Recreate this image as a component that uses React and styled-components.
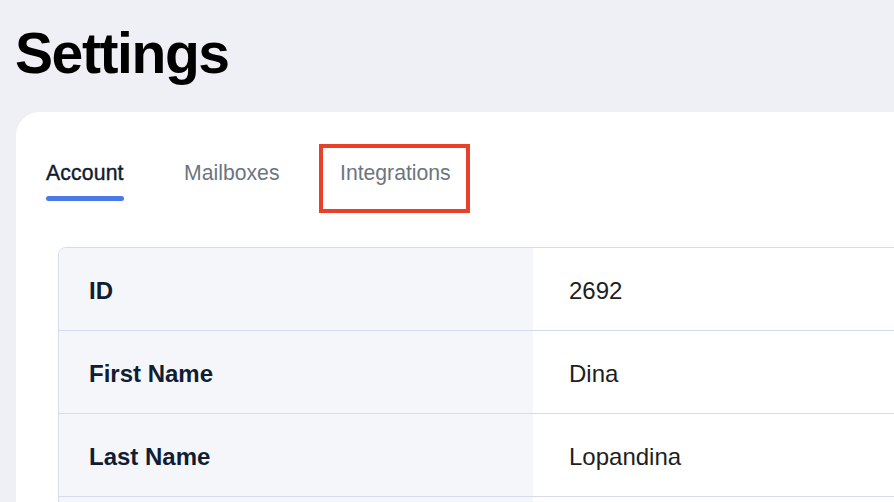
import React from 'react'
import styled, { createGlobalStyle } from 'styled-components'

const GlobalStyle = createGlobalStyle`
html, body {
    margin: 0;
    padding: 0;
    overflow: hidden;
    background: #eff0f5;
    font-family: "Liberation Sans", Arial, Helvetica, sans-serif;
}
`

const tabs = ['Account', 'Mailboxes', 'Integrations']

const fields = [
    { label: 'ID', value: '2692' },
    { label: 'First Name', value: 'Dina' },
    { label: 'Last Name', value: 'Lopandina' },
    { label: '', value: '' },
]

export default function App() {
    return (
        <Page>
            <GlobalStyle />
            <Title>Settings</Title>
            <Card>
                <TabBar>
                    {tabs.map((t, i) => (
                        <Tab key={t} marked={t === 'Integrations'}>
                            <TabLabel active={i === 0}>{t}</TabLabel>
                            <Indicator active={i === 0} />
                        </Tab>
                    ))}
                </TabBar>

                <Table>
                    {fields.map((f, i) => (
                        <Row key={i}>
                            <Label>{f.label}</Label>
                            <Value>{f.value}</Value>
                        </Row>
                    ))}
                </Table>
            </Card>
        </Page>
    )
}

const Page = styled.div`
padding: 0 0 0 16px;
height: 502px;
overflow: hidden;
`

const Title = styled.h1`
margin: 0 0 0 -1px;
padding-top: 21px;
height: 112px;
box-sizing: border-box;
font-size: 57px;
line-height: 64px;
font-weight: 700;
letter-spacing: -1.4px;
color: #000;
`

const Card = styled.div`
width: 1000px;
background: #fff;
border-top-left-radius: 24px;
padding: 49px 0 0 30px;
min-height: 600px;
box-sizing: border-box;
`

const TabBar = styled.div`
display: flex;
gap: 60.5px;
`

const Tab = styled.div`
position: relative;
display: flex;
flex-direction: column;
gap: 11px;
&::after {
    content: '';
    display: ${p => (p.marked ? 'block' : 'none')};
    position: absolute;
    left: -21px;
    right: -19px;
    top: -17px;
    bottom: -12px;
    border: 4px solid #e8412a;
}
`

const TabLabel = styled.span`
font-size: 21.2px;
line-height: 24px;
color: ${p => (p.active ? '#111b2e' : '#6b7580')};
-webkit-text-stroke: ${p => (p.active ? '0.4px #111b2e' : '0')};
letter-spacing: ${p => (p.active ? '0.15px' : '0')};
`

const Indicator = styled.span`
height: 5px;
border-radius: 3px;
background: ${p => (p.active ? '#4a79e8' : 'transparent')};
`

const Table = styled.div`
margin: 46px 0 0 12px;
border: 1px solid #d5dcec;
border-top-left-radius: 8px;
overflow: hidden;
`

const Row = styled.div`
display: grid;
grid-template-columns: 474px 1fr;
height: 82px;
border-bottom: 1px solid #d5dcec;
`

const Label = styled.div`
display: flex;
align-items: center;
padding: 3px 0 0 30px;
background: #f5f6fa;
font-size: 24px;
font-weight: 700;
color: #111d33;
`

const Value = styled.div`
display: flex;
align-items: center;
padding: 3px 0 0 36px;
font-size: 24px;
color: #1e1e1e;
`
